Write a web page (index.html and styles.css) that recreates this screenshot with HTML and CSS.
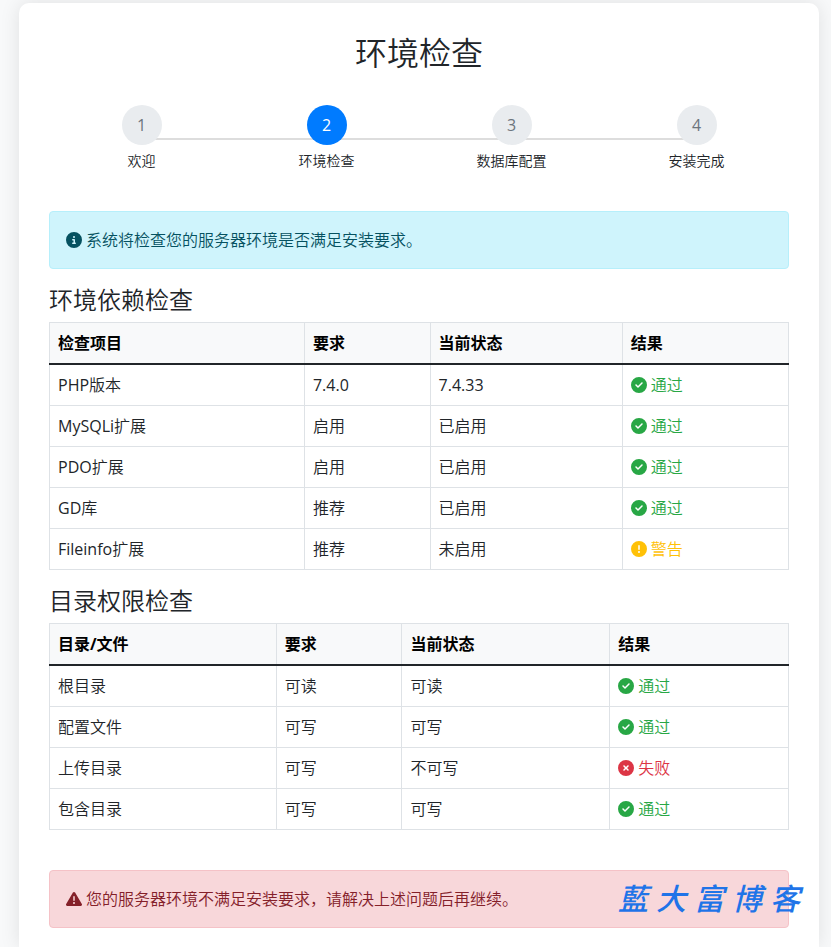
FILE: index.html
```html
<!DOCTYPE html>
<html lang="zh-CN">
<head>
<meta charset="utf-8">
<meta name="viewport" content="width=device-width, initial-scale=1">
<title>环境检查</title>
<link rel="stylesheet" href="styles.css">
</head>
<body>
<svg class="sprite" aria-hidden="true">
  <symbol id="check" viewBox="0 0 512 512"><path d="M256 512A256 256 0 1 0 256 0a256 256 0 1 0 0 512zM369 209L241 337c-9.400 9.400-24.600 9.400-33.900 0l-64-64c-9.400-9.400-9.400-24.600 0-33.900s24.600-9.400 33.900 0l47 47L335 175c9.400-9.400 24.600-9.400 33.900 0s9.400 24.600 0 33.900z"/></symbol>
  <symbol id="warn" viewBox="0 0 512 512"><path d="M256 512A256 256 0 1 0 256 0a256 256 0 1 0 0 512zm0-384c13.300 0 24 10.700 24 24V264c0 13.300-10.700 24-24 24s-24-10.700-24-24V152c0-13.300 10.700-24 24-24zM224 352a32 32 0 1 1 64 0 32 32 0 1 1 -64 0z"/></symbol>
  <symbol id="fail" viewBox="0 0 512 512"><path d="M256 512A256 256 0 1 0 256 0a256 256 0 1 0 0 512zM175 175c9.400-9.400 24.600-9.400 33.900 0l47 47 47-47c9.400-9.400 24.600-9.400 33.900 0s9.400 24.600 0 33.900l-47 47 47 47c9.400 9.400 9.400 24.600 0 33.900s-24.600 9.400-33.900 0l-47-47-47 47c-9.400 9.400-24.600 9.400-33.900 0s-9.400-24.600 0-33.900l47-47-47-47c-9.400-9.400-9.400-24.600 0-33.900z"/></symbol>
  <symbol id="info" viewBox="0 0 512 512"><path d="M256 512A256 256 0 1 0 256 0a256 256 0 1 0 0 512zM216 336h24V272H216c-13.300 0-24-10.700-24-24s10.700-24 24-24h48c13.300 0 24 10.700 24 24v88h8c13.300 0 24 10.700 24 24s-10.700 24-24 24H216c-13.300 0-24-10.700-24-24s10.700-24 24-24zm40-208a32 32 0 1 1 0 64 32 32 0 1 1 0-64z"/></symbol>
  <symbol id="alert" viewBox="0 0 512 512"><path d="M256 32c14.200 0 27.300 7.500 34.500 19.800l216 368c7.300 12.400 7.300 27.700 .2 40.100S486.300 480 472 480H40c-14.300 0-27.600-7.700-34.700-20.100s-7-27.800 .2-40.100l216-368C228.700 39.500 241.800 32 256 32zm0 128c-13.300 0-24 10.700-24 24V296c0 13.300 10.700 24 24 24s24-10.700 24-24V184c0-13.300-10.700-24-24-24zm32 224a32 32 0 1 0 -64 0 32 32 0 1 0 64 0z"/></symbol>
</svg>
<main class="card">
  <h1>环境检查</h1>
  <ol class="steps">
    <li class="step"><span class="dot">1</span><span class="label">欢迎</span></li>
    <li class="step active" aria-current="step"><span class="dot">2</span><span class="label">环境检查</span></li>
    <li class="step"><span class="dot">3</span><span class="label">数据库配置</span></li>
    <li class="step"><span class="dot">4</span><span class="label">安装完成</span></li>
  </ol>

  <div class="alert alert-info"><svg class="icon"><use href="#info"/></svg><span>系统将检查您的服务器环境是否满足安装要求。</span></div>

  <h2>环境依赖检查</h2>
  <table class="table env">
    <colgroup><col class="name"><col class="need"><col class="now"><col></colgroup>
    <thead><tr><th scope="col">检查项目</th><th scope="col">要求</th><th scope="col">当前状态</th><th scope="col">结果</th></tr></thead>
    <tbody>
      <tr><td><span class="latin">PHP</span>版本</td><td><span class="latin">7.4.0</span></td><td><span class="latin">7.4.33</span></td><td><span class="result pass"><svg class="icon"><use href="#check"/></svg>通过</span></td></tr>
      <tr><td><span class="latin">MySQLi</span>扩展</td><td>启用</td><td>已启用</td><td><span class="result pass"><svg class="icon"><use href="#check"/></svg>通过</span></td></tr>
      <tr><td><span class="latin">PDO</span>扩展</td><td>启用</td><td>已启用</td><td><span class="result pass"><svg class="icon"><use href="#check"/></svg>通过</span></td></tr>
      <tr><td><span class="latin">GD</span>库</td><td>推荐</td><td>已启用</td><td><span class="result pass"><svg class="icon"><use href="#check"/></svg>通过</span></td></tr>
      <tr><td><span class="latin">Fileinfo</span>扩展</td><td>推荐</td><td>未启用</td><td><span class="result warning"><svg class="icon"><use href="#warn"/></svg>警告</span></td></tr>
    </tbody>
  </table>

  <h2>目录权限检查</h2>
  <table class="table dirs">
    <colgroup><col class="name"><col class="need"><col class="now"><col></colgroup>
    <thead><tr><th scope="col">目录/文件</th><th scope="col">要求</th><th scope="col">当前状态</th><th scope="col">结果</th></tr></thead>
    <tbody>
      <tr><td>根目录</td><td>可读</td><td>可读</td><td><span class="result pass"><svg class="icon"><use href="#check"/></svg>通过</span></td></tr>
      <tr><td>配置文件</td><td>可写</td><td>可写</td><td><span class="result pass"><svg class="icon"><use href="#check"/></svg>通过</span></td></tr>
      <tr><td>上传目录</td><td>可写</td><td>不可写</td><td><span class="result failure"><svg class="icon"><use href="#fail"/></svg>失败</span></td></tr>
      <tr><td>包含目录</td><td>可写</td><td>可写</td><td><span class="result pass"><svg class="icon"><use href="#check"/></svg>通过</span></td></tr>
    </tbody>
  </table>

  <div class="alert alert-danger"><svg class="icon"><use href="#alert"/></svg><span>您的服务器环境不满足安装要求，请解决上述问题后再继续。</span>
    <div class="watermark"><span>藍</span><span>大</span><span>富</span><span>博</span><span>客</span></div>
  </div>
</main>
</body>
</html>
```

FILE: styles.css
```css
* {
  box-sizing: border-box;
}

body {
  margin: 0;
  padding: 3px 12px 0 19px;
  min-height: 100vh;
  background: #f8f9fa;
  color: #212529;
  font: 350 16px/24px "Open Sans", "Noto Sans CJK SC", sans-serif;
  overflow-x: hidden;
}

.sprite {
  position: absolute;
  width: 0;
  height: 0;
}

.card {
  max-width: 800px;
  margin: 0 auto;
  padding: 30px 30px 19px;
  background: #fff;
  border-radius: 10px 10px 0 0;
  box-shadow: 0 0 20px rgba(0, 0, 0, 0.1);
}

h1 {
  margin: 0 0 32px;
  font-size: 32px;
  line-height: 40px;
  font-weight: 350;
  text-align: center;
}

h2 {
  margin: 16px 0 8px;
  font-size: 24px;
  line-height: 29px;
  font-weight: 350;
}

.latin {
  font-weight: 400;
}

.steps {
  position: relative;
  display: flex;
  margin: 0 0 40px;
  padding: 0;
  list-style: none;
}

.steps::before {
  content: "";
  position: absolute;
  top: 33px;
  left: 13%;
  right: 13%;
  height: 2px;
  background: #ddd;
}

.step {
  position: relative;
  flex: 1;
  display: flex;
  flex-direction: column;
  align-items: center;
  gap: 5px;
}

.dot {
  width: 40px;
  height: 40px;
  border-radius: 50%;
  background: #e9ecef;
  color: #6c757d;
  line-height: 40px;
  text-align: center;
  font-weight: 400;
}

.active .dot {
  background: #007bff;
  color: #fff;
}

.label {
  font-size: 14px;
  line-height: 21px;
}

.icon {
  flex: none;
  width: 16px;
  height: 16px;
  fill: currentColor;
}

.alert {
  position: relative;
  display: flex;
  align-items: center;
  gap: 4px;
  padding: 16px;
  border: 1px solid;
  border-radius: 4px;
}

.alert-info {
  background: #cff4fc;
  border-color: #b6effb;
  color: #055160;
}

.alert-danger {
  margin-top: 40px;
  background: #f8d7da;
  border-color: #f5c2c7;
  color: #842029;
}

.table {
  width: 100%;
  table-layout: fixed;
  border-collapse: collapse;
}

.table th,
.table td {
  padding: 8px;
  border: 1px solid #dee2e6;
  text-align: left;
}

.table th {
  background: #f8f9fa;
  color: #000;
  font-weight: 700;
}

.table thead th {
  border-bottom: 2px solid #212529;
}

.env .name { width: 34.5%; }
.env .need { width: 17%; }
.env .now { width: 26%; }

.dirs .name { width: 30.7%; }
.dirs .need { width: 17%; }
.dirs .now { width: 28.1%; }

.result {
  display: flex;
  align-items: center;
  gap: 4px;
}

.pass { color: #28a745; }
.warning { color: #ffc107; }
.failure { color: #dc3545; }

.watermark {
  position: absolute;
  top: 8px;
  right: -12px;
  display: flex;
  gap: 8px;
  color: #1f74e8;
  font-size: 30px;
  line-height: 40px;
  font-weight: 500;
  font-style: italic;
}
```
